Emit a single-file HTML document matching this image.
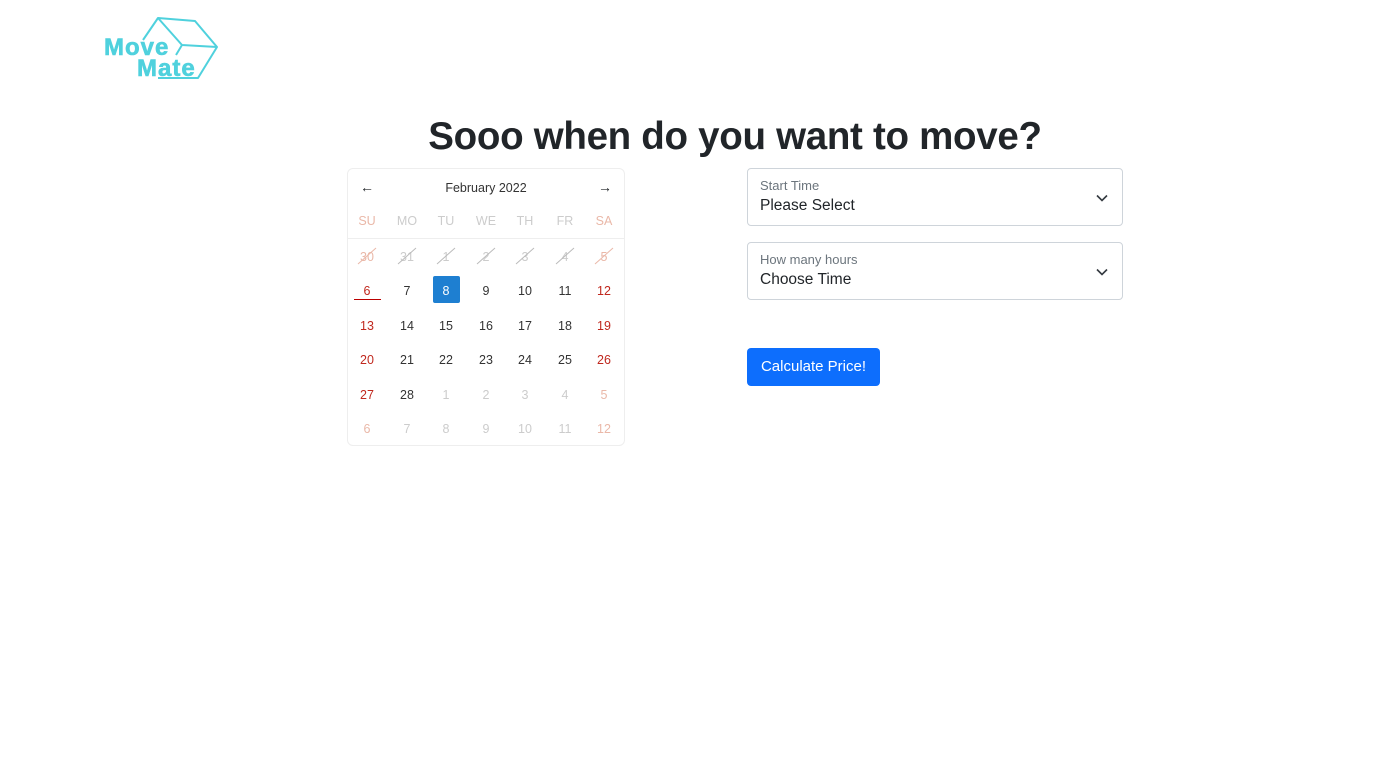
<!DOCTYPE html>
<html><head><meta charset="utf-8">
<style>
*{margin:0;padding:0;box-sizing:border-box}
body{width:1387px;height:777px;background:#fff;font-family:"Liberation Sans",sans-serif;position:relative;overflow:hidden;color:#212529}
.abs{position:absolute}
h1{position:absolute;left:0;width:1470px;text-align:center;top:115px;font-size:38.5px;font-weight:bold;color:#212529;letter-spacing:-0.3px}
.cal{left:347px;top:168px;width:278px;height:278px;border:1px solid #eee;border-radius:6px}
.c{position:absolute;width:30px;margin-left:-15px;text-align:center;font-size:12.5px;line-height:16px}
.sel{position:absolute;left:747px;width:376px;height:58px;border:1px solid #ced4da;border-radius:4px}
.sel .l{position:absolute;left:12px;top:9px;font-size:13px;color:#6c757d}
.sel .v{position:absolute;left:12px;top:28px;font-size:15.5px;color:#212529}
.sel svg{position:absolute;right:14px;top:23px}
.btn{left:747px;top:348px;width:133px;height:38px;background:#0d6efd;border-radius:4px;color:#fff;font-size:15px;line-height:38px;text-align:center}
</style></head><body>
<svg class="abs" style="left:95px;top:10px" width="135" height="80" viewBox="95 10 135 80">
<g fill="none" stroke="#4fd1dd" stroke-width="2" stroke-linejoin="round">
<polyline points="143,40 158,18 195,21 217,47 198,78 158,78"/>
<polyline points="158,18 182,45 217,47"/>
<line x1="182" y1="45" x2="176" y2="55"/>
</g>
<text x="104" y="55" font-family="Liberation Sans" font-weight="bold" font-size="24" letter-spacing="1" fill="#4fd1dd" stroke="#4fd1dd" stroke-width="0.6">Move</text>
<text x="137" y="76" font-family="Liberation Sans" font-weight="bold" font-size="24" letter-spacing="1" fill="#4fd1dd" stroke="#4fd1dd" stroke-width="0.6">Mate</text>
</svg>
<h1>Sooo when do you want to move?</h1>
<div class="abs cal"></div>
<div class="abs" style="left:348px;top:238px;width:276px;height:1px;background:#eee"></div>
<div class="abs" style="left:433px;top:276px;width:27px;height:27px;background:#1e7fd1;border-radius:2px"></div>
<div class="c" style="left:367px;top:179px;font-size:14px">←</div>
<div class="c" style="left:486px;top:180px;width:120px;margin-left:-60px;color:#333">February 2022</div>
<div class="c" style="left:605px;top:179px;font-size:14px">→</div>
<div id="g"></div>
<div class="abs" style="left:354px;top:299px;width:27px;height:1px;background:#b00"></div>
<script>
var xs=[367,407,446,486,525,565,604],h='';
var wd=['SU','MO','TU','WE','TH','FR','SA'];
wd.forEach(function(d,i){h+='<div class="c" style="left:'+xs[i]+'px;top:213px;color:'+(i==0||i==6?'#eab8a8':'#ccc')+'">'+d+'</div>'});
var rows=[[30,31,1,2,3,4,5],[6,7,8,9,10,11,12],[13,14,15,16,17,18,19],[20,21,22,23,24,25,26],[27,28,1,2,3,4,5],[6,7,8,9,10,11,12]];
var ys=[249,283,318,352,387,421];
rows.forEach(function(r,ri){r.forEach(function(n,i){
 var we=(i==0||i==6),col;
 if(ri==0||ri==5||(ri==4&&i>1)) col=we?'#eab8a8':'#ccc';
 else col=we?'#c0281e':'#333';
 if(ri==1&&i==2) col='#fff';
 h+='<div class="c" style="left:'+xs[i]+'px;top:'+ys[ri]+'px;color:'+col+'">'+n+'</div>';
 if(ri==0) h+='<svg class="abs" style="left:'+(xs[i]-10)+'px;top:246px" width="20" height="20"><line x1="1" y1="18" x2="19" y2="2" stroke="'+(we?'#eab8a8':'#bbb')+'" stroke-width="1"/></svg>';
})});
document.getElementById('g').innerHTML=h;
</script>
<div class="sel" style="top:168px"><div class="l">Start Time</div><div class="v">Please Select</div>
<svg width="12" height="12" viewBox="0 0 12 12"><path d="M1 3.5 6 8.5 11 3.5" fill="none" stroke="#343a40" stroke-width="1.6"/></svg></div>
<div class="sel" style="top:242px"><div class="l">How many hours</div><div class="v">Choose Time</div>
<svg width="12" height="12" viewBox="0 0 12 12"><path d="M1 3.5 6 8.5 11 3.5" fill="none" stroke="#343a40" stroke-width="1.6"/></svg></div>
<div class="abs btn">Calculate Price!</div>
</body></html>
